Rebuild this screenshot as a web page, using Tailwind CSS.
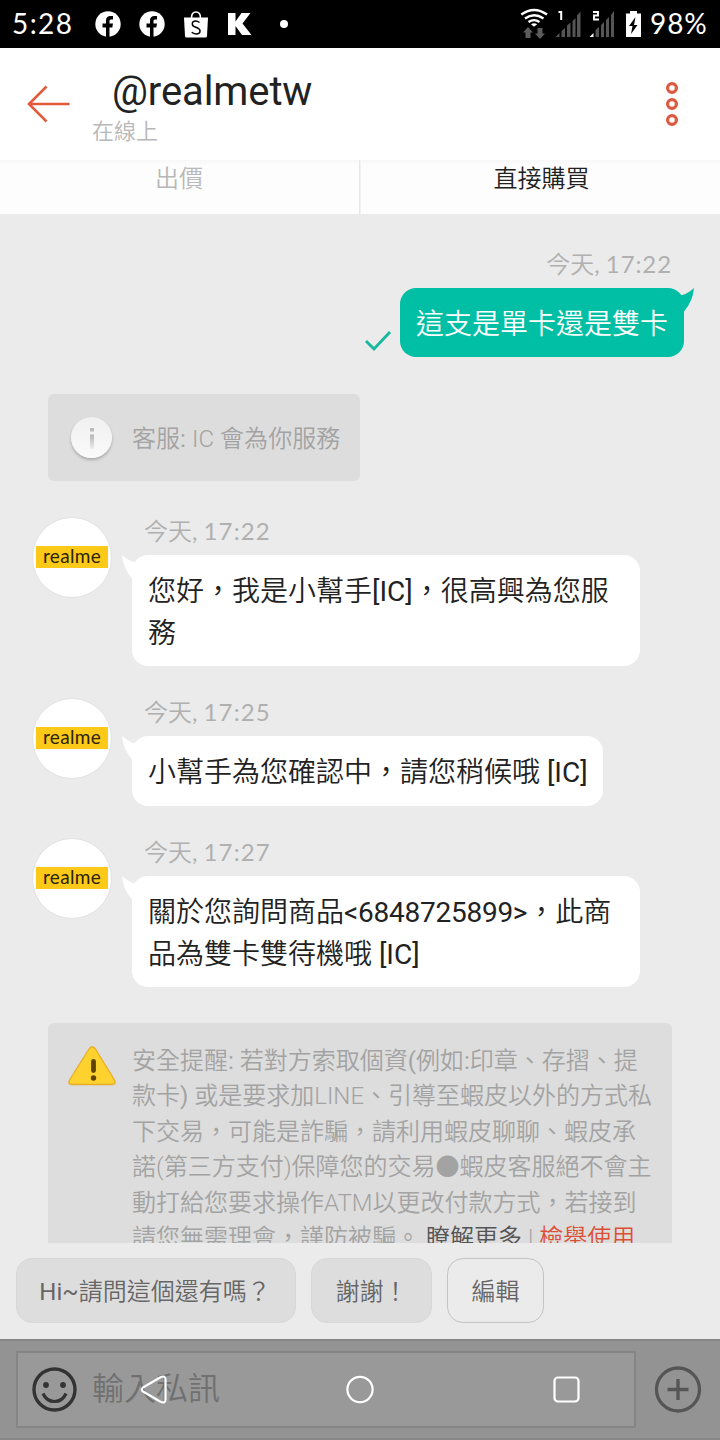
<!DOCTYPE html>
<html lang="zh-TW">
<head>
<meta charset="utf-8">
<title>@realmetw</title>
<script src="https://cdn.jsdelivr.net/npm/@tailwindcss/browser@4"></script>
</head>
<body class="w-[720px] h-[1440px] overflow-hidden flex flex-col bg-[#ebebeb] font-[Roboto,'Noto_Sans_CJK_TC_DemiLight','Noto_Sans_CJK_TC',sans-serif] text-[#222222]">

<!-- status bar -->
<div class="h-12 shrink-0 bg-black text-white flex items-center pl-[12px] pr-[12px] font-[Lato,sans-serif] text-[28px] leading-[46px]">
  <span class="w-[83px] h-[48px] tracking-[1.4px] whitespace-nowrap">5:28</span>
  <svg class="w-[26px] h-[26px]" viewBox="0 0 26 26"><circle cx="13" cy="13" r="12.7" fill="#fff"/><path d="M11 26v-9.500H7.500v-4H11V9.500Q11 5 15.500 5H18v3.500h-2q-1.500 0-1.500 1.500v2.500H18l-.7 4h-2.800V26z" fill="#000"/></svg>
  <svg class="w-[26px] h-[26px] ml-[18px]" viewBox="0 0 26 26"><circle cx="13" cy="13" r="12.700" fill="#fff"/><path d="M11 26v-9.500H7.500v-4H11V9.500Q11 5 15.500 5H18v3.500h-2q-1.500 0-1.500 1.500v2.500H18l-.7 4h-2.800V26z" fill="#000"/></svg>
  <svg class="w-[26px] h-[28px] ml-[18px]" viewBox="0 0 26 28"><path d="M8.500 8Q8.500 2 13 2t4.500 6" fill="none" stroke="#fff" stroke-width="1.600"/><path d="M1 7.500h24L24 26q-.2 1.500-1.500 1.500h-19Q2.200 27.500 2 26z" fill="#fff"/><path d="M16.500 12.500q-2-1.500-3.700-1.500-3.500 0-3.500 2.900 0 2.200 3.500 3.300 4.200 1.400 4.200 3.700 0 3-4 3-2.500 0-4.300-1.600" fill="none" stroke="#000" stroke-width="1.500"/></svg>
  <svg class="w-[26px] h-[26px] ml-[18px]" viewBox="0 0 26 26"><path d="M1 2h7.500v8.500L14.500 2h9l-8 10.500L24.500 24h-9.500L8.500 15v9H1z" fill="#fff"/></svg>
  <span class="w-2 h-2 rounded-full bg-white ml-[27px]"></span>
  <svg class="w-[126px] h-[48px] ml-auto shrink-0" viewBox="518 0 126 48">
    <g fill="none" stroke="#fff" stroke-width="2.400"><path d="M521.300 14.500Q534 5.500 547 14.500"/><path d="M525 18.500Q534 12 543.500 18.500"/><path d="M528.500 22Q534 18.300 539.500 22"/></g>
    <path d="M531 24.200q3-1.800 6.200 0L534 26.800z" fill="#fff"/>
    <path d="M528 27l5 5.500h-2.500V38h-5v-5.500H523zM540 39l-5-5.500h2.500V28h5v5.500H545z" fill="#5c5c5c"/>
    <path d="M558.500 12h2.700v8" fill="none" stroke="#fff" stroke-width="2"/>
    <path d="M593 12h5v3.500h-4V19.500h5" fill="none" stroke="#fff" stroke-width="1.900"/>
    <g fill="#555"><path d="M555.500 37l4-4v4zM561.500 31l3.500-3v9h-3.500zM567 25.500l3.500-3V37H567zM572.500 21l3-3v19h-3zM577 15.500l3.500-4V37H577z"/><path d="M595.500 30l3.500-3v10h-3.500zM601 25l3-3v15h-3zM606 20l3-3v20h-3zM611 15l3-4v26h-3z"/></g><path d="M589.500 37l4-4v4z" fill="#fff"/>
    <path d="M630 11h7v2.500h4V37h-15V13.500h4z" fill="#fff"/><path d="M635.500 17L629 26h3.500l-1.500 8 6.500-9H634z" fill="#000"/>
  </svg>
  <span class="ml-[6px] h-[48px] w-[58px] tracking-[0.9px] whitespace-nowrap">98%</span>
</div>

<!-- chat header -->
<div class="h-28 shrink-0 bg-white flex">
  <svg class="w-12 h-12 ml-6 mt-8 shrink-0" viewBox="0 0 48 48"><path d="M22.500 6.500L5 24l17.500 17.500M5 24h40.500" fill="none" stroke="#e25a3a" stroke-width="2.500"/></svg>
  <div class="ml-[20px] mt-[20px]">
    <div class="pl-5 text-[40px] leading-[48px] tracking-[-0.1px]">@realmetw</div>
    <div class="text-[22px] leading-[32px] text-[#b8b8b8]">在線上</div>
  </div>
  <svg class="w-4 h-12 ml-auto mr-10 mt-8" viewBox="0 0 16 48"><g fill="none" stroke="#da5b41" stroke-width="3.200"><circle cx="8" cy="8" r="4.400"/><circle cx="8" cy="24" r="4.400"/><circle cx="8" cy="40" r="4.400"/></g></svg>
</div>

<!-- offer / buy tabs -->
<div class="h-[54px] shrink-0 bg-gradient-to-b from-[#f8f8f8] to-[#fdfdfd] to-10% grid grid-cols-2 text-center text-2xl leading-[39px]">
  <div class="text-[#b8b8b8] border-r border-[#e8e8e8] pr-px">出價</div>
  <div class="border-l border-[#f2f2f2] pl-[2px]">直接購買</div>
</div>

<!-- conversation -->
<main class="h-[1029px] shrink-0 overflow-hidden flex flex-col">
  <div class="mt-[33px] mr-12 text-right text-[24px] leading-[34px] font-[Lato,'Noto_Sans_CJK_TC_DemiLight','Noto_Sans_CJK_TC',sans-serif] text-[#b0b0b0]">今天, <span class="tracking-[0.9px]">17:22</span></div>
  <div class="mt-[7px] mr-9 flex justify-end items-end">
    <svg class="w-7 h-6 mr-2 mb-[4px]" viewBox="0 0 28 24"><path d="M2 12l8 8L26 3" fill="none" stroke="#18b8a0" stroke-width="2.900"/></svg>
    <div class="relative w-[284px] h-[69px] rounded-[16px] bg-[#00bfa5] text-white text-[28px] leading-[74px] text-center">這支是單卡還是雙卡
      <svg class="absolute left-[276px] top-0 w-[18px] h-[24px]" viewBox="0 0 18 24"><path d="M0 4L5.500 7.300Q12 5.500 18 0 17 13 8 23.500H0z" fill="#00bfa5"/></svg>
    </div>
  </div>

  <div class="mt-[37px] ml-12 w-[312px] h-[87px] shrink-0 rounded-md bg-[#dddddd] flex items-center pl-[23px] text-2xl text-[#a3a3a3]">
    <div class="w-[41px] h-[41px] rounded-full bg-gradient-to-b from-[#f0f0f0] to-[#fafafa] shadow-[0_2px_3px_#aaaaaa] flex items-center justify-center">
      <svg class="w-2 h-6" viewBox="0 0 8 24"><defs><linearGradient id="ig" x1="0" y1="0" x2="0" y2="1"><stop offset="0" stop-color="#b5b5b5"/><stop offset="1" stop-color="#eeeeee"/></linearGradient></defs><path d="M2 2h4v3.500H2z" fill="#bcbcbc"/><path d="M2 8.500h4V23H2z" fill="url(#ig)"/></svg>
    </div>
    <span class="ml-[20px] pt-[2px] tracking-[0.050px] whitespace-nowrap">客服: <span class="font-light">IC</span> 會為你服務</span>
  </div>

  <!-- message -->
  <section class="mt-[36px] h-[149px] shrink-0 flex pl-8">
    <div class="w-20 h-[81px] shrink-0 rounded-full bg-white border border-[#e2e2e2] flex items-center justify-center"><span class="w-[72px] h-[22px] shrink-0 -mt-[2px] bg-[#fcc919] text-center font-[Lato,sans-serif] text-[19px] leading-[19px] tracking-[0.3px] text-[#2a2205]">realme</span></div>
    <div class="ml-5">
      <div class="pl-3 h-[38px] text-[24px] leading-[28px] font-[Lato,'Noto_Sans_CJK_TC_DemiLight','Noto_Sans_CJK_TC',sans-serif] text-[#b0b0b0]">今天, <span class="tracking-[1.1px]">17:22</span></div>
      <div class="relative w-[508px] h-[111px] rounded-[16px] bg-white pl-4 pt-[16px] text-[28px] leading-[42px] whitespace-nowrap">
        <svg class="absolute -left-[10px] top-0 w-[18px] h-[24px]" viewBox="0 0 18 24"><path d="M18 4L12.500 7.300Q6 5.500 0 0 1 13 10 23.500h8z" fill="#fff"/></svg>您好，我是小幫手[IC]，很高興為您服<br>務</div>
    </div>
  </section>

  <section class="mt-[32px] h-[108px] shrink-0 flex pl-8">
    <div class="w-20 h-[81px] shrink-0 rounded-full bg-white border border-[#e2e2e2] flex items-center justify-center"><span class="w-[72px] h-[22px] shrink-0 -mt-[2px] bg-[#fcc919] text-center font-[Lato,sans-serif] text-[19px] leading-[19px] tracking-[0.3px] text-[#2a2205]">realme</span></div>
    <div class="ml-5">
      <div class="pl-3 h-[38px] text-[24px] leading-[28px] font-[Lato,'Noto_Sans_CJK_TC_DemiLight','Noto_Sans_CJK_TC',sans-serif] text-[#b0b0b0]">今天, <span class="tracking-[1.1px]">17:25</span></div>
      <div class="relative w-[471px] h-[70px] rounded-[16px] bg-white pl-4 pt-[16px] text-[28px] leading-[42px] whitespace-nowrap">
        <svg class="absolute -left-[10px] top-0 w-[18px] h-[24px]" viewBox="0 0 18 24"><path d="M18 4L12.500 7.300Q6 5.500 0 0 1 13 10 23.500h8z" fill="#fff"/></svg>小幫手為您確認中，請您稍候哦 [IC]</div>
    </div>
  </section>

  <section class="mt-[32px] h-[149px] shrink-0 flex pl-8">
    <div class="w-20 h-[81px] shrink-0 rounded-full bg-white border border-[#e2e2e2] flex items-center justify-center"><span class="w-[72px] h-[22px] shrink-0 -mt-[2px] bg-[#fcc919] text-center font-[Lato,sans-serif] text-[19px] leading-[19px] tracking-[0.3px] text-[#2a2205]">realme</span></div>
    <div class="ml-5">
      <div class="pl-3 h-[38px] text-[24px] leading-[28px] font-[Lato,'Noto_Sans_CJK_TC_DemiLight','Noto_Sans_CJK_TC',sans-serif] text-[#b0b0b0]">今天, <span class="tracking-[1.1px]">17:27</span></div>
      <div class="relative w-[508px] h-[111px] rounded-[16px] bg-white pl-4 pt-[16px] text-[28px] leading-[42px] whitespace-nowrap">
        <svg class="absolute -left-[10px] top-0 w-[18px] h-[24px]" viewBox="0 0 18 24"><path d="M18 4L12.500 7.300Q6 5.500 0 0 1 13 10 23.500h8z" fill="#fff"/></svg>關於您詢問商品<span class="tracking-[-0.250px]">&lt;6848725899&gt;</span>，此商<br>品為雙卡雙待機哦 [IC]</div>
    </div>
  </section>

  <!-- safety notice -->
  <div class="mt-[36px] ml-12 w-[624px] h-[260px] shrink-0 rounded-md bg-[#dddddd] flex pl-5 pt-[21px]">
    <svg class="w-12 h-10 mt-[2px] shrink-0" viewBox="0 0 48 40"><path d="M21 3q3-4.500 6.500 0L46.500 34q2 4.500-2.500 4.500H4Q-.5 38.500 1.500 34z" fill="#fdd22f" stroke="#e8ae28" stroke-width="1.300"/><path d="M25.500 15.500v9" stroke="#5f4300" stroke-width="4.800" stroke-linecap="round"/><circle cx="25.500" cy="32" r="2.700" fill="#5f4300"/></svg>
    <div class="ml-4 text-2xl leading-[35.400px] text-[#a3a3a3] whitespace-nowrap">安全提醒: 若對方索取個資(例如:印章、存摺、提<br>款卡) 或是要求加<span class="font-light">LINE</span>、引導至蝦皮以外的方式私<br>下交易，可能是詐騙，請利用蝦皮聊聊、蝦皮承<br>諾<span class="font-light">(</span>第三方支付<span class="font-light">)</span>保障您的交易●蝦皮客服絕不會主<br>動打給您要求操作<span class="font-light">ATM</span>以更改付款方式，若接到<br>請您無需理會，謹防被騙。<span class="text-[#555555] ml-[6px]">瞭解更多</span> <span class="font-light">|</span> <span class="text-[#dc4f35]">檢舉使用</span></div>
  </div>
</main>

<!-- quick replies -->
<div class="h-24 shrink-0 flex items-start gap-[15px] pt-[15px] pl-4 text-2xl leading-[66px] text-[#666666] text-center whitespace-nowrap">
  <div class="w-[280px] h-[65px] rounded-[16px] bg-[#dddddd] border border-[#d8d8d8] pr-[2px]">Hi~請問這個還有嗎？</div>
  <div class="w-[121px] h-[65px] rounded-[16px] bg-[#dddddd] border border-[#d8d8d8]">謝謝！</div>
  <div class="w-[97px] h-[65px] rounded-[16px] border border-[#c4c4c4]">編輯</div>
</div>

<!-- message input with the system navigation over it -->
<footer class="relative h-[101px] shrink-0 bg-[#939393] border-t-2 border-b-2 border-[#878787] flex items-start pt-[10px] pl-4">
  <div class="w-[620px] h-[77px] border-2 border-[#858585] bg-[#999999] flex items-center pl-[14px]">
    <svg class="w-[46px] h-[46px]" viewBox="0 0 46 46"><g fill="none" stroke="#333333" stroke-width="3.400"><circle cx="22.500" cy="22.500" r="20.500"/><path d="M11 26.500q3.500 8 11.500 8T34 26.500" stroke-width="3.200"/></g><g fill="#333333"><circle cx="14" cy="18" r="2.900"/><circle cx="31" cy="18" r="2.900"/></g></svg>
    <span class="ml-[14px] text-[32px] leading-[44px] text-[#707070] pb-px">輸入私訊</span>
  </div>
  <svg class="w-[48px] h-[48px] ml-[18px] mt-[14px]" viewBox="0 0 48 48"><circle cx="24" cy="24.500" r="21.500" fill="none" stroke="#555555" stroke-width="3.300"/><path d="M24 14v21M13.500 24.500h21" stroke="#555555" stroke-width="3.300"/></svg>
  <svg class="absolute left-0 -top-[2px] w-[720px] h-[101px]" viewBox="0 0 720 101"><g fill="none" stroke="#fff" stroke-width="2.200" stroke-linejoin="round"><path d="M143 48.500L160.500 38.200Q165.500 36 165.500 40.500V60.500Q165.500 65 160.500 62.800L143 52.500Q140.500 50.500 143 48.500z"/><circle cx="360" cy="50.500" r="12.600"/><rect x="554.500" y="38.500" width="24" height="24" rx="3.500"/></g></svg>
</footer>
</body>
</html>
